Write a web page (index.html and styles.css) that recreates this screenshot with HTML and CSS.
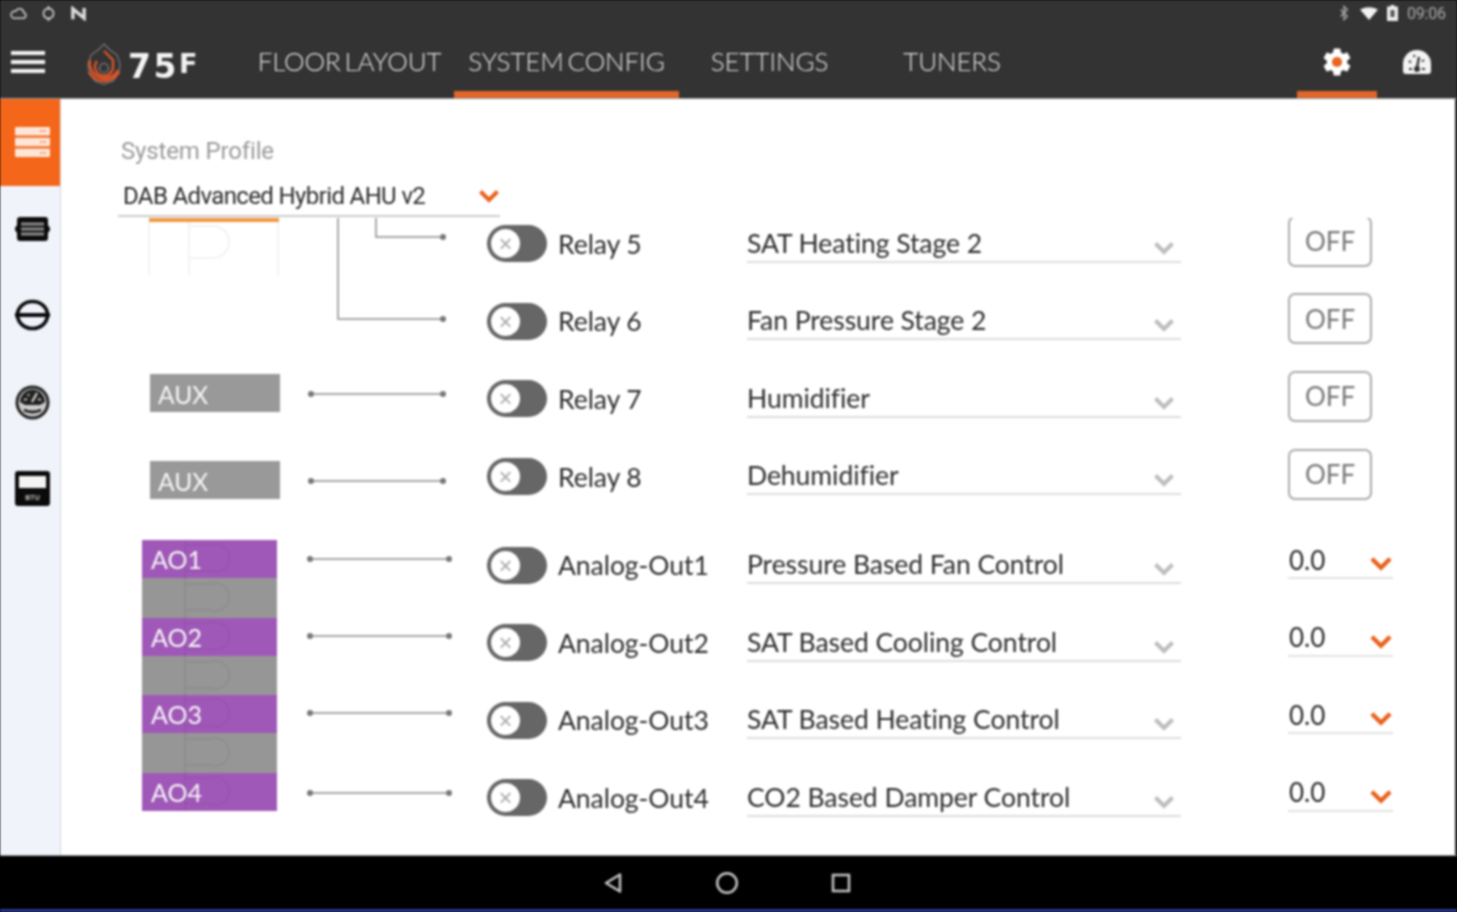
FILE: index.html
```html
<!DOCTYPE html>
<html lang="en">
<head>
<meta charset="utf-8">
<title>75F System Config</title>
<link rel="stylesheet" href="styles.css">
</head>
<body>
<div class="app">
  <header class="top">
    <div class="status">
      <div class="status-left">
        <svg class="st" viewBox="0 0 20 16"><path d="M5 13h10a3 3 0 0 0 .6-5.900A4.500 4.500 0 0 0 7 5.600 3.700 3.700 0 0 0 5 13z" fill="none" stroke="#ccc" stroke-width="1.600"/></svg>
        <svg class="st" viewBox="0 0 20 16"><circle cx="10" cy="8" r="5.400" fill="none" stroke="#ccc" stroke-width="1.800"/><path d="M10 0v4M10 12v4" stroke="#ccc" stroke-width="1.800"/></svg>
        <svg class="st" viewBox="0 0 20 16"><path d="M4 14V3l12 10V2" fill="none" stroke="#ddd" stroke-width="3.600"/></svg>
      </div>
      <div class="status-right">
        <svg class="bt" viewBox="0 0 12 18"><path d="M2 5l8 8-4 4V1l4 4-8 8" fill="none" stroke="#aaa" stroke-width="1.600"/></svg>
        <svg class="wifi" viewBox="0 0 18 13"><path d="M0 2.500Q9-2 18 2.500L9 13z" fill="#f2f2f2"/></svg>
        <svg class="batt" viewBox="0 0 11 16"><path d="M3.500 0h4v1.500H11V16H0V1.500h3.500z" fill="#ededed"/><rect x="3.500" y="5" width="4" height="7" fill="#555"/></svg>
        <span class="clock">09:06</span>
      </div>
    </div>
    <nav class="nav">
      <div class="menu"><svg class="burger" viewBox="0 0 34 24"><path d="M0 3h34M0 12h34M0 21h34" stroke="#f2f2f2" stroke-width="4"/></svg></div>
      <div class="brand">
        <svg class="flame" viewBox="0 0 36 44">
          <path d="M18 2l6 6 7 5 3 9-1 9-6 8-9 3-9-3-6-8-1-9 3-9 7-5z" fill="none" stroke="#777" stroke-width="1.200"/>
          <path d="M4 18a15 15 0 0 0 28 10M3 30a17 17 0 0 0 30 0" fill="none" stroke="#d9552a" stroke-width="2.600"/>
          <path d="M18 9l9 9v6a9 9 0 1 1-16-5" fill="none" stroke="#d9552a" stroke-width="2.400"/>
          <circle cx="18" cy="26" r="4.500" fill="none" stroke="#888" stroke-width="1.200"/>
        </svg>
        <span class="mark">75<span class="mark-f">F</span></span>
      </div>
      <a class="tab tab-floor">FLOOR LAYOUT</a>
      <a class="tab tab-system active">SYSTEM CONFIG</a>
      <a class="tab tab-settings">SETTINGS</a>
      <a class="tab tab-tuners">TUNERS</a>
      <a class="tab tab-icon active push">
        <svg class="gear" viewBox="0 0 24 24"><path fill="#fff" d="M19.140 12.940c.04-.3.06-.61.06-.94 0-.32-.02-.64-.07-.94l2.030-1.580c.18-.14.23-.41.12-.61l-1.920-3.320c-.12-.22-.37-.29-.59-.22l-2.390.96c-.5-.38-1.030-.7-1.620-.94l-.36-2.540c-.04-.24-.24-.41-.48-.41h-3.840c-.24 0-.43.17-.47.41l-.36 2.540c-.59.24-1.130.57-1.620.94l-2.390-.96c-.22-.08-.47 0-.59.22L2.740 8.870c-.12.21-.08.47.12.61l2.030 1.580c-.05.3-.09.63-.09.94s.02.64.07.94l-2.030 1.580c-.18.14-.23.41-.12.61l1.920 3.320c.12.22.37.29.59.22l2.390-.96c.5.38 1.030.7 1.620.94l.36 2.540c.05.24.24.41.48.41h3.840c.24 0 .44-.17.47-.41l.36-2.540c.59-.24 1.130-.56 1.620-.94l2.390.96c.22.08.47 0 .59-.22l1.920-3.320c.12-.22.07-.47-.12-.61l-2.010-1.580z"/><circle cx="12" cy="12" r="3.600" fill="#e8641f"/></svg>
      </a>
      <a class="tab tab-icon">
        <svg class="gauge" viewBox="0 0 28 24"><path d="M14 0a14 14 0 0 1 14 14v7a3 3 0 0 1-3 3H3a3 3 0 0 1-3-3v-7A14 14 0 0 1 14 0z" fill="#f4f4f4"/><path d="M14 18L16 7" stroke="#333" stroke-width="2.400"/><circle cx="14" cy="19" r="3" fill="#333"/><path d="M6 19h3M19 19h3M6 11l2 1.500M11 5l.5 2M21 10l-2 1.500" stroke="#333" stroke-width="2"/></svg>
      </a>
    </nav>
  </header>

  <main class="main">
    <aside class="side">
      <div class="side-item on">
        <svg class="side-icon" viewBox="0 0 35 32"><g fill="#fde6d8"><rect y="1" width="35" height="8.400" rx="1"/><rect y="11.800" width="35" height="8.400" rx="1"/><rect y="22.600" width="35" height="8.400" rx="1"/></g><path d="M25 5h6M25 16h6M25 27h6" stroke="#f4a070" stroke-width="2" stroke-dasharray="2.500 1"/></svg>
      </div>
      <div class="side-item">
        <svg class="side-icon" viewBox="0 0 35 26"><path d="M5 1h25a3 3 0 0 1 3 3v5l2 3v2l-2 3v5a3 3 0 0 1-3 3H5a3 3 0 0 1-3-3v-5l-2-3v-2l2-3V4a3 3 0 0 1 3-3z" fill="#0b0b0b"/><path d="M6 8h23M6 13h23M6 18h23" stroke="#8d8d8d" stroke-width="3"/></svg>
      </div>
      <div class="side-item">
        <svg class="side-icon" viewBox="0 0 35 32"><ellipse cx="17.500" cy="16" rx="15" ry="13.500" fill="none" stroke="#0b0b0b" stroke-width="3.600"/><path d="M0 16h35" stroke="#0b0b0b" stroke-width="4"/></svg>
      </div>
      <div class="side-item">
        <svg class="side-icon" viewBox="0 0 35 35"><circle cx="17.500" cy="17.500" r="17" fill="#222"/><circle cx="17.500" cy="17.500" r="14" fill="#ccc"/><path d="M5 17a12.500 12.500 0 0 1 25 0l-5 3H10z" fill="#222"/><path d="M17 17l5-9" stroke="#ddd" stroke-width="2"/><path d="M9 15l3-1M26 15l-3-1M13 9l1 2" stroke="#ddd" stroke-width="1.600"/><path d="M9 25q8.500 4 17 0" stroke="#222" stroke-width="3" fill="none"/></svg>
      </div>
      <div class="side-item">
        <svg class="side-icon" viewBox="0 0 35 35"><rect width="35" height="35" rx="3" fill="#0b0b0b"/><rect x="4" y="5" width="27" height="12" fill="#f3f3f3"/><text x="17.500" y="29" class="btu">BTU</text></svg>
      </div>
    </aside>

    <section class="panel">
      <div class="profile">
        <div class="profile-label">System Profile</div>
        <div class="profile-select">
          <span>DAB Advanced Hybrid AHU v2</span>
          <svg class="chev chev-profile" viewBox="0 0 22 14"><path d="M2.500 2.500L11 11l8.500-8.500" fill="none" stroke="#e8611c" stroke-width="4"/></svg>
        </div>
      </div>

      <div class="wiring">
        <div class="diagram">
          <svg class="lines" viewBox="61 217 427 638">
            <g fill="none" stroke="#efefef" stroke-width="1.500">
              <path d="M149 222v53M189 222v53M278 222v53M189 258h24a16 16 0 0 0 0-32h-24"/>
            </g>
            <g fill="none" stroke="#8c8c8c" stroke-width="1.500">
              <path d="M376 217v20h67M338 217v102h105"/>
              <path d="M311 394h132M311 481h132M310 559h139M310 636h139M310 713h139M310 793h139"/>
            </g>
            <g fill="#777">
              <circle cx="443" cy="237" r="3"/><circle cx="443" cy="319" r="3"/>
              <circle cx="311" cy="394" r="3"/><circle cx="443" cy="394" r="3"/>
              <circle cx="311" cy="481" r="3"/><circle cx="443" cy="481" r="3"/>
              <circle cx="310" cy="559" r="3"/><circle cx="449" cy="559" r="3"/>
              <circle cx="310" cy="636" r="3"/><circle cx="449" cy="636" r="3"/>
              <circle cx="310" cy="713" r="3"/><circle cx="449" cy="713" r="3"/>
              <circle cx="310" cy="793" r="3"/><circle cx="449" cy="793" r="3"/>
            </g>
          </svg>
          <div class="bar-top"></div>
          <div class="port aux aux-1">AUX</div>
          <div class="port aux aux-2">AUX</div>
          <div class="ao-stack">
            <div class="port ao">AO1</div><div class="ao-gap"></div>
            <div class="port ao">AO2</div><div class="ao-gap"></div>
            <div class="port ao">AO3</div><div class="ao-gap"></div>
            <div class="port ao">AO4</div>
            <svg class="ao-ghost" viewBox="142 540 135 271">
              <path d="M185 540v271M185 584h25a14 14 0 1 1 0 26h-25M185 545h25a14 14 0 1 1 0 26h-25M185 623h25a14 14 0 1 1 0 26h-25M185 662h25a14 14 0 1 1 0 26h-25M185 700h25a14 14 0 1 1 0 26h-25M185 739h25a14 14 0 1 1 0 26h-25M185 778h25a14 14 0 1 1 0 26h-25" fill="none" stroke="#000" stroke-opacity=".07" stroke-width="1.500"/>
            </svg>
          </div>
        </div>

        <div class="rows">
          <div class="group">
            <div class="row">
              <div class="toggle"><span class="knob">×</span></div><div class="io">Relay 5</div>
              <div class="pick"><span>SAT Heating Stage 2</span><svg class="chev" viewBox="0 0 22 14"><path d="M2.500 2.500L11 11l8.500-8.500" fill="none" stroke="#bdbdbd" stroke-width="4"/></svg></div>
              <button class="off">OFF</button>
            </div>
            <div class="row">
              <div class="toggle"><span class="knob">×</span></div><div class="io">Relay 6</div>
              <div class="pick"><span>Fan Pressure Stage 2</span><svg class="chev" viewBox="0 0 22 14"><path d="M2.500 2.500L11 11l8.500-8.500" fill="none" stroke="#bdbdbd" stroke-width="4"/></svg></div>
              <button class="off">OFF</button>
            </div>
            <div class="row">
              <div class="toggle"><span class="knob">×</span></div><div class="io">Relay 7</div>
              <div class="pick"><span>Humidifier</span><svg class="chev" viewBox="0 0 22 14"><path d="M2.500 2.500L11 11l8.500-8.500" fill="none" stroke="#bdbdbd" stroke-width="4"/></svg></div>
              <button class="off">OFF</button>
            </div>
            <div class="row">
              <div class="toggle"><span class="knob">×</span></div><div class="io">Relay 8</div>
              <div class="pick"><span>Dehumidifier</span><svg class="chev" viewBox="0 0 22 14"><path d="M2.500 2.500L11 11l8.500-8.500" fill="none" stroke="#bdbdbd" stroke-width="4"/></svg></div>
              <button class="off">OFF</button>
            </div>
          </div>
          <div class="group analog">
            <div class="row">
              <div class="toggle"><span class="knob">×</span></div><div class="io">Analog-Out1</div>
              <div class="pick"><span>Pressure Based Fan Control</span><svg class="chev" viewBox="0 0 22 14"><path d="M2.500 2.500L11 11l8.500-8.500" fill="none" stroke="#bdbdbd" stroke-width="4"/></svg></div>
              <div class="value"><span>0.0</span><svg class="chev" viewBox="0 0 22 14"><path d="M2.500 2.500L11 11l8.500-8.500" fill="none" stroke="#e8611c" stroke-width="4"/></svg></div>
            </div>
            <div class="row">
              <div class="toggle"><span class="knob">×</span></div><div class="io">Analog-Out2</div>
              <div class="pick"><span>SAT Based Cooling Control</span><svg class="chev" viewBox="0 0 22 14"><path d="M2.500 2.500L11 11l8.500-8.500" fill="none" stroke="#bdbdbd" stroke-width="4"/></svg></div>
              <div class="value"><span>0.0</span><svg class="chev" viewBox="0 0 22 14"><path d="M2.500 2.500L11 11l8.500-8.500" fill="none" stroke="#e8611c" stroke-width="4"/></svg></div>
            </div>
            <div class="row">
              <div class="toggle"><span class="knob">×</span></div><div class="io">Analog-Out3</div>
              <div class="pick"><span>SAT Based Heating Control</span><svg class="chev" viewBox="0 0 22 14"><path d="M2.500 2.500L11 11l8.500-8.500" fill="none" stroke="#bdbdbd" stroke-width="4"/></svg></div>
              <div class="value"><span>0.0</span><svg class="chev" viewBox="0 0 22 14"><path d="M2.500 2.500L11 11l8.500-8.500" fill="none" stroke="#e8611c" stroke-width="4"/></svg></div>
            </div>
            <div class="row">
              <div class="toggle"><span class="knob">×</span></div><div class="io">Analog-Out4</div>
              <div class="pick"><span>CO2 Based Damper Control</span><svg class="chev" viewBox="0 0 22 14"><path d="M2.500 2.500L11 11l8.500-8.500" fill="none" stroke="#bdbdbd" stroke-width="4"/></svg></div>
              <div class="value"><span>0.0</span><svg class="chev" viewBox="0 0 22 14"><path d="M2.500 2.500L11 11l8.500-8.500" fill="none" stroke="#e8611c" stroke-width="4"/></svg></div>
            </div>
          </div>
        </div>
      </div>
    </section>
  </main>

  <footer class="sysbar">
    <svg class="sys" viewBox="0 0 24 24"><path d="M19 3.500v17L5 12z" fill="none" stroke="#c4c4c4" stroke-width="2.500" stroke-linejoin="round"/></svg>
    <svg class="sys" viewBox="0 0 24 24"><circle cx="12" cy="12" r="9.800" fill="none" stroke="#c4c4c4" stroke-width="2.500"/></svg>
    <svg class="sys" viewBox="0 0 24 24"><rect x="4" y="4" width="16" height="16" fill="none" stroke="#c4c4c4" stroke-width="2.500"/></svg>
  </footer>
</div>
</body>
</html>
```

FILE: styles.css
```css
* { box-sizing: border-box; }
html, body { margin: 0; padding: 0; background: #000; }
body { font-family: Lato, "Liberation Sans", sans-serif; }
.app {
  width: 1457px; height: 912px; display: flex; flex-direction: column;
  overflow: hidden; background: #fff; filter: blur(.8px);
}

/* header */
.top { height: 99px; flex: none; background: #333; border-bottom: 1px solid #999; }
.status { height: 26px; display: flex; justify-content: space-between; align-items: center; padding: 0 9px 0 9px; }
.status-left { display: flex; gap: 11px; }
.st { width: 19px; height: 15px; display: block; }
.status-right { display: flex; align-items: center; }
.bt { width: 10px; height: 16px; margin-right: 11px; }
.wifi { width: 18px; height: 13px; margin-right: 9px; }
.batt { width: 11px; height: 16px; margin-right: 9px; }
.clock { font: 16px Roboto, sans-serif; letter-spacing: -.2px; color: #a8a8a8; width: 41px; white-space: nowrap; }

.nav { height: 72px; display: flex; }
.menu { width: 86px; padding: 24px 0 0 11px; }
.burger { width: 34px; height: 24px; display: block; }
.brand { width: 159px; display: flex; align-items: flex-start; padding-top: 16px; }
.flame { width: 36px; height: 44px; flex: none; }
.mark { font: 700 33px/34px "DejaVu Sans", sans-serif; color: #f4f4f4; letter-spacing: 2.500px; margin: 5px 0 0 6px; }
.mark-f { font-size: 27px; vertical-align: 5px; letter-spacing: 0; }

.tab {
  height: 72px; display: flex; align-items: center; justify-content: center;
  font: 300 26px Lato, sans-serif; color: #e2e2e2; letter-spacing: -.15px; word-spacing: -3px; white-space: nowrap;
  border-bottom: 7px solid transparent; padding-top: 4px;
}
.tab.active { border-bottom-color: #e0662a; }
.tab-floor { width: 209px; }
.tab-system { width: 225px; }
.tab-settings { width: 181px; }
.tab-tuners { width: 184px; }
.tab-icon { width: 80px; padding-top: 6px; }
.push { margin-left: auto; }
.gear { width: 34px; height: 34px; }
.gauge { width: 28px; height: 24px; }

/* main */
.main { flex: 1; min-height: 0; display: flex; border-right: 2px solid #333; }
.side { width: 61px; flex: none; background: #f1f3fb; border-right: 1px solid #d6d7dd; }
.side-item { height: 86.600px; display: flex; align-items: center; justify-content: center; padding-left: 5px; }
.side-item.on { background: #f4661a; }
.side-icon { width: 35px; height: auto; display: block; }
.btu { font: 700 7px "Liberation Sans", sans-serif; fill: #ccc; text-anchor: middle; }

.panel { flex: 1; min-width: 0; display: flex; flex-direction: column; }
.profile { height: 119px; flex: none; padding-left: 57px; }
.profile-label { font: 24px/28px Roboto, sans-serif; color: #9a9a9a; padding: 38px 0 0 3px; letter-spacing: -.15px; }
.profile-select {
  width: 382px; height: 52px; margin-top: 0; padding: 17px 0 0 5px; position: relative;
  font: 24px/28px Roboto, sans-serif; color: #2b2b2b; letter-spacing: -.63px; border-bottom: 2px solid #ccc;
  display: flex; align-items: flex-start; justify-content: space-between;
}
.chev { width: 22px; height: 14px; flex: none; display: block; }
.chev-profile { margin: 7px 0 0 0; width: 22px; }

.wiring { flex: 1; min-height: 0; display: flex; overflow: hidden; }
.diagram { width: 426px; height: 638px; flex: none; position: relative; margin-top: -1px; }
.lines { position: absolute; left: 0; top: 0; width: 427px; height: 638px; }
.bar-top { position: absolute; left: 88px; top: 0; width: 130px; height: 5px; background: #f0983f; }
.port { color: #f6f6f6; font: 25px Lato, sans-serif; display: flex; align-items: center; }
.aux { position: absolute; left: 89px; width: 130px; height: 38px; background: #999; padding: 2px 0 0 8px; font-size: 24.500px; }
.aux-1 { top: 157px; }
.aux-2 { top: 244px; }
.ao-stack { position: absolute; left: 81px; top: 323px; width: 135px; display: flex; flex-direction: column; background: #969696; }
.ao { height: 38px; background: #a058b8; padding-left: 9px; }
.ao-gap { height: 39.500px; }
.ao-ghost { position: absolute; left: 0; top: 0; width: 135px; height: 271px; pointer-events: none; }

.rows { flex: none; margin-top: -13px; }
.group.analog { margin-top: 11px; }
.row { height: 77.600px; display: grid; grid-template-columns: 71px 189px 434px auto; align-items: center; color: #2b2b2b; }
.toggle { width: 60px; height: 37px; border-radius: 19px; background: #666; padding: 4px; }
.knob {
  display: flex; width: 29px; height: 29px; border-radius: 50%; background: #fff;
  align-items: center; justify-content: center; color: #aaa; font: 24px/29px "Liberation Sans", sans-serif;
}
.io { font: 26.500px Lato, sans-serif; color: #2e2e2e; letter-spacing: -.05px; }
.pick {
  height: 38px; align-self: end; margin-bottom: 20px; display: flex; justify-content: space-between; align-items: center;
  font: 26.500px Lato, sans-serif; color: #2e2e2e; letter-spacing: -.05px; border-bottom: 2px solid #ddd; padding-right: 6px;
}
.pick .chev { margin-top: 10px; }
.off {
  margin-left: 107px; width: 84px; height: 51px; background: #fff; border: 2px solid #aaa; border-radius: 7px;
  font: 26px Lato, sans-serif; color: #777; padding: 0; margin-top: -5px;
}
.value {
  margin-left: 107px; width: 105px; height: 40px; margin-bottom: 12px; padding: 3px 0 0 1px; display: flex; justify-content: space-between; align-items: center;
  font: 26px Lato, sans-serif; color: #2b2b2b; border-bottom: 2px solid #e2e2e2;
}
.value .chev { width: 24px; height: 15px; margin-top: 8px; }

/* system bar */
.sysbar {
  height: 57px; flex: none; background: #000; border-top: 1px solid #999; border-bottom: 3px solid #2a3a9a;
  display: flex; justify-content: center; align-items: center; gap: 90px; padding-right: 4px;
}
.sys { width: 24px; height: 24px; }
```
